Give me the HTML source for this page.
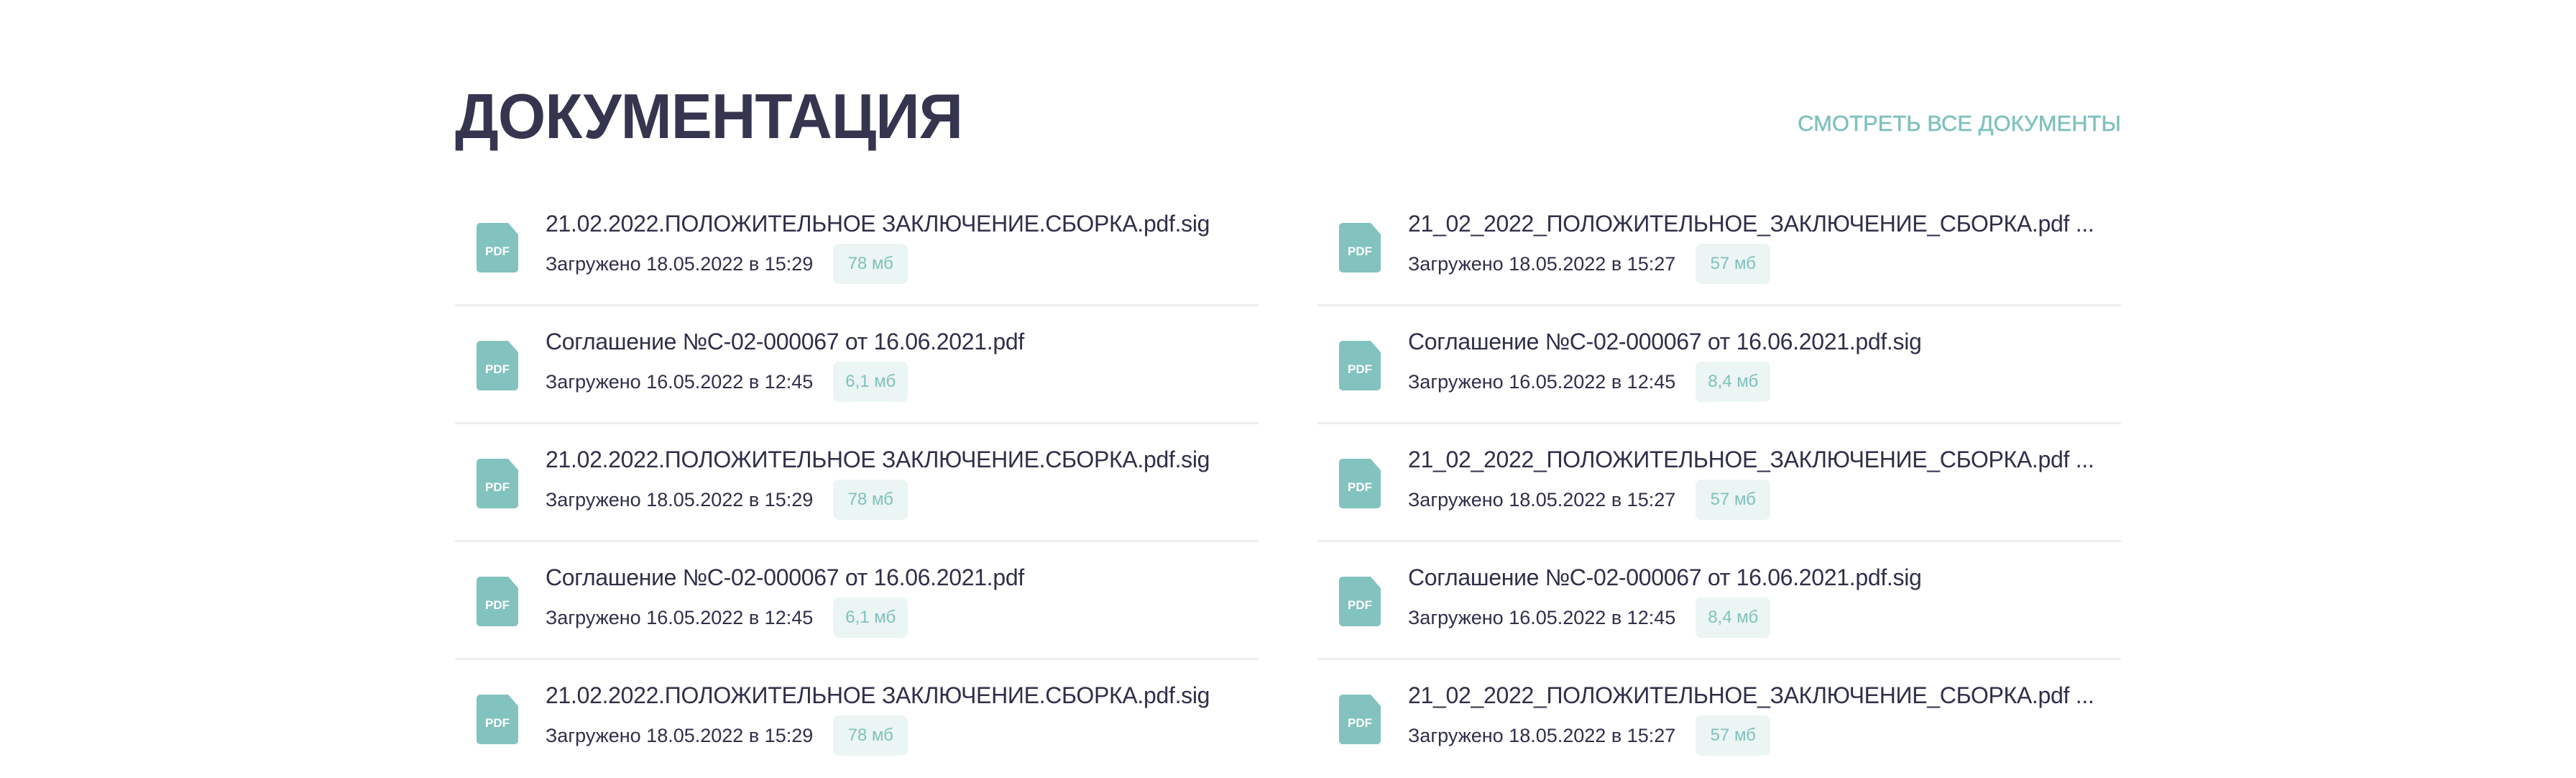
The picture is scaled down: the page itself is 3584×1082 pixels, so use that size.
<!DOCTYPE html>
<html><head><meta charset="utf-8"><style>
*{margin:0;padding:0;box-sizing:border-box}
body{width:3584px;height:1068px;background:#fff;position:relative;overflow:hidden;font-family:"Liberation Sans",sans-serif;color:#2f2f4a}
.title{position:absolute;left:633px;top:118px;font-size:88px;line-height:88px;font-weight:700;color:#35354f;white-space:nowrap;transform:scaleX(0.97);transform-origin:left top;letter-spacing:-1px}
.link{position:absolute;right:633px;top:156px;font-size:31px;line-height:31px;color:#7fc1bd;white-space:nowrap;-webkit-text-stroke:0.5px #7fc1bd}
.row{position:absolute;width:1118px;height:164px}
.icon{position:absolute;left:30px;top:48px;width:58px;height:69px}
.name{position:absolute;left:126px;top:33px;font-size:32px;line-height:32px;white-space:nowrap;color:#2f2f4a;letter-spacing:-0.3px}
.sub{position:absolute;left:126px;top:77px;font-size:27px;line-height:27px;white-space:nowrap;color:#2f2f4a;display:flex;align-items:center}
.badge{display:inline-block;margin-left:28px;width:104px;height:56px;line-height:56px;text-align:center;background:#ebf5f3;color:#7fc1bd;border-radius:8px;font-size:24px}
.div{position:absolute;left:0;bottom:0;width:100%;height:3px;background:#eeeeee}
</style></head><body>
<div class="title">ДОКУМЕНТАЦИЯ</div>
<div class="link">СМОТРЕТЬ ВСЕ ДОКУМЕНТЫ</div>

<svg width="0" height="0" style="position:absolute"><defs>
<symbol id="pdf" viewBox="0 0 58 69"><path d="M6 0H44L58 16V63Q58 69 52 69H6Q0 69 0 63V6Q0 0 6 0Z" fill="#82c2bf"/><text x="29" y="45" text-anchor="middle" font-family="Liberation Sans,sans-serif" font-weight="700" font-size="17" fill="#fff">PDF</text></symbol>
</defs></svg>

<div class="row" style="left:633px;top:262px"><svg class="icon"><use href="#pdf"/></svg><div class="name">21.02.2022.ПОЛОЖИТЕЛЬНОЕ ЗАКЛЮЧЕНИЕ.СБОРКА.pdf.sig</div><div class="sub">Загружено 18.05.2022 в 15:29<span class="badge">78 мб</span></div><div class="div"></div></div>
<div class="row" style="left:633px;top:426px"><svg class="icon"><use href="#pdf"/></svg><div class="name">Соглашение №С-02-000067 от 16.06.2021.pdf</div><div class="sub">Загружено 16.05.2022 в 12:45<span class="badge">6,1 мб</span></div><div class="div"></div></div>
<div class="row" style="left:633px;top:590px"><svg class="icon"><use href="#pdf"/></svg><div class="name">21.02.2022.ПОЛОЖИТЕЛЬНОЕ ЗАКЛЮЧЕНИЕ.СБОРКА.pdf.sig</div><div class="sub">Загружено 18.05.2022 в 15:29<span class="badge">78 мб</span></div><div class="div"></div></div>
<div class="row" style="left:633px;top:754px"><svg class="icon"><use href="#pdf"/></svg><div class="name">Соглашение №С-02-000067 от 16.06.2021.pdf</div><div class="sub">Загружено 16.05.2022 в 12:45<span class="badge">6,1 мб</span></div><div class="div"></div></div>
<div class="row" style="left:633px;top:918px"><svg class="icon"><use href="#pdf"/></svg><div class="name">21.02.2022.ПОЛОЖИТЕЛЬНОЕ ЗАКЛЮЧЕНИЕ.СБОРКА.pdf.sig</div><div class="sub">Загружено 18.05.2022 в 15:29<span class="badge">78 мб</span></div></div>

<div class="row" style="left:1833px;top:262px"><svg class="icon"><use href="#pdf"/></svg><div class="name">21_02_2022_ПОЛОЖИТЕЛЬНОЕ_ЗАКЛЮЧЕНИЕ_СБОРКА.pdf ...</div><div class="sub">Загружено 18.05.2022 в 15:27<span class="badge">57 мб</span></div><div class="div"></div></div>
<div class="row" style="left:1833px;top:426px"><svg class="icon"><use href="#pdf"/></svg><div class="name">Соглашение №С-02-000067 от 16.06.2021.pdf.sig</div><div class="sub">Загружено 16.05.2022 в 12:45<span class="badge">8,4 мб</span></div><div class="div"></div></div>
<div class="row" style="left:1833px;top:590px"><svg class="icon"><use href="#pdf"/></svg><div class="name">21_02_2022_ПОЛОЖИТЕЛЬНОЕ_ЗАКЛЮЧЕНИЕ_СБОРКА.pdf ...</div><div class="sub">Загружено 18.05.2022 в 15:27<span class="badge">57 мб</span></div><div class="div"></div></div>
<div class="row" style="left:1833px;top:754px"><svg class="icon"><use href="#pdf"/></svg><div class="name">Соглашение №С-02-000067 от 16.06.2021.pdf.sig</div><div class="sub">Загружено 16.05.2022 в 12:45<span class="badge">8,4 мб</span></div><div class="div"></div></div>
<div class="row" style="left:1833px;top:918px"><svg class="icon"><use href="#pdf"/></svg><div class="name">21_02_2022_ПОЛОЖИТЕЛЬНОЕ_ЗАКЛЮЧЕНИЕ_СБОРКА.pdf ...</div><div class="sub">Загружено 18.05.2022 в 15:27<span class="badge">57 мб</span></div></div>
</body></html>
